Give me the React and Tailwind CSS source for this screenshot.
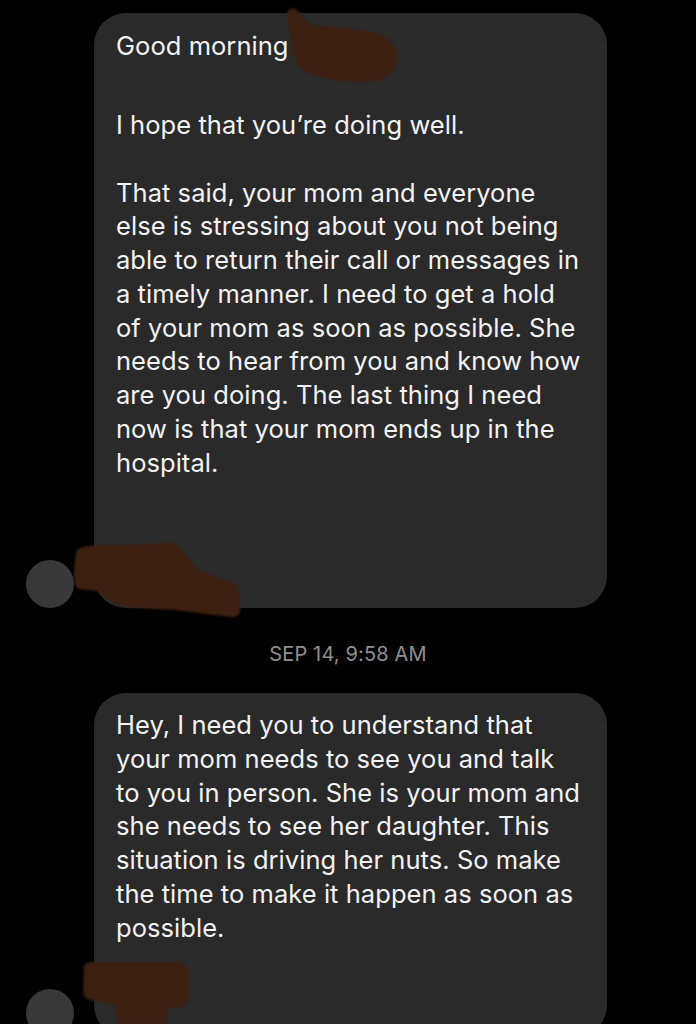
const Bubble = ({ children, className }) => (
  <div className={`w-[513px] rounded-[32px] bg-[#2a2a2b] pl-[22px] pr-[24px] text-[25.5px] leading-[33.75px] tracking-[0.05px] text-[#f2f2f2] ${className}`}>
    {children}
  </div>
);

const Avatar = () => <div className="h-12 w-12 shrink-0 rounded-full bg-[#38383a]" />;

export default function App() {
  return (
    <div className="relative h-[1024px] w-[696px] overflow-hidden bg-black font-['Inter',sans-serif]">
      <div className="pt-[13px] pl-[26px]">
        <div className="flex items-end gap-5">
          <Avatar />
          <Bubble className="h-[595px] pt-[16px]">
            <p>Good morning</p>
            <p className="mt-[45px]">I hope that you’re doing well.</p>
            <p className="mt-[34px]">
              That said, your mom and everyone else is stressing about you not being able to return their call or messages in a timely manner. I need to get a hold of your mom as soon as possible. She needs to hear from you and know how are you doing. The last thing I need now is that your mom ends up in the hospital.
            </p>
          </Bubble>
        </div>
      </div>

      <div className="mt-[34px] text-center text-[20px] leading-6 tracking-[0.15px] text-[#8e8e90]">SEP 14, 9:58 AM</div>

      <div className="mt-[27px] pl-[26px]">
        <div className="flex items-end gap-5">
          <Avatar />
          <Bubble className="h-[344px] pt-[15px]">
            <p>
              Hey, I need you to understand that your mom needs to see you and talk to you in person. She is your mom and she needs to see her daughter. This situation is driving her nuts. So make the time to make it happen as soon as possible.
            </p>
          </Bubble>
        </div>
      </div>

      {/* redaction scribbles */}
      <svg className="absolute top-0 left-0 blur-[1px]" width="696" height="1024" viewBox="0 0 696 1024" fill="#3b1f11">
        <path d="M287 12Q292 5 298 11L310 25Q340 27 375 32Q396 40 398 58Q396 76 375 81Q350 84 330 79Q305 76 297 62Q288 35 287 12Z" />
        <path d="M76 552Q78 547 90 546L172 543Q180 544 186 556L198 570L236 584Q241 590 240 612Q238 618 230 617L175 610L125 607Q108 602 98 591L78 589Q73 585 74 570Z" />
        <path d="M84 966Q86 962 92 962L180 962Q188 964 189 974L188 1002Q186 1008 176 1007L168 1008L166 1024L118 1024L114 1004L90 1000Q83 998 83 990Z" />
      </svg>
    </div>
  );
}
